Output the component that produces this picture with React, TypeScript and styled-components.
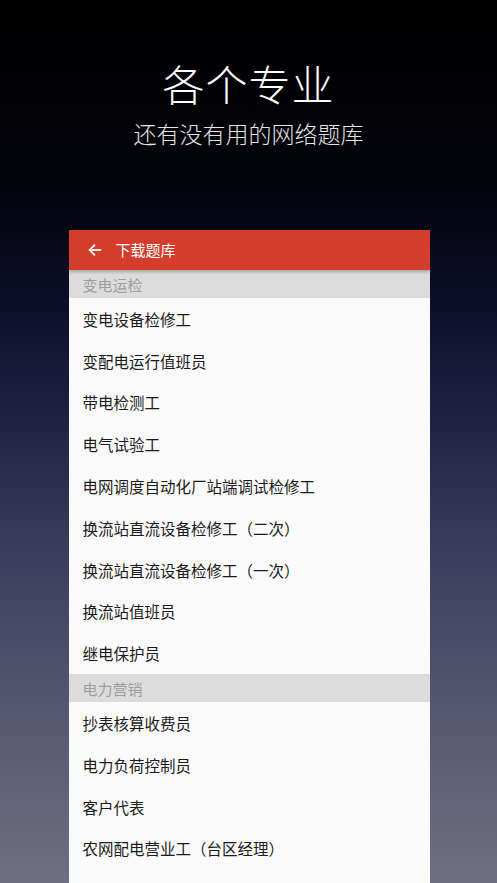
import styled, {createGlobalStyle} from "styled-components";

const GlobalStyle = createGlobalStyle`
    html, body {
        margin: 0;
        padding: 0;
        background: #000;
    }
    * {
        box-sizing: border-box;
    }
`;

const sections = [
    {
        title: "变电运检",
        items: [
            "变电设备检修工",
            "变配电运行值班员",
            "带电检测工",
            "电气试验工",
            "电网调度自动化厂站端调试检修工",
            "换流站直流设备检修工（二次）",
            "换流站直流设备检修工（一次）",
            "换流站值班员",
            "继电保护员",
        ],
    },
    {
        title: "电力营销",
        items: [
            "抄表核算收费员",
            "电力负荷控制员",
            "客户代表",
            "农网配电营业工（台区经理）",
        ],
    },
];

const BackArrow = () => (
    <svg width="16" height="16" viewBox="0 0 24 24" fill="none" stroke="#fff" strokeWidth="2.6"
         strokeLinecap="square" strokeLinejoin="miter">
        <path d="M20 12H5"/>
        <path d="M11 5l-7 7 7 7"/>
    </svg>
);

const App = () => {
    return (
        <Page>
            <GlobalStyle/>
            <Hero>
                <Title>各个专业</Title>
                <Subtitle>还有没有用的网络题库</Subtitle>
            </Hero>

            <Phone>
                <AppBar>
                    <BackArrow/>
                    <AppBarTitle>下载题库</AppBarTitle>
                </AppBar>
                <List>
                    {sections.map(section => (
                        <div key={section.title}>
                            <SectionHeader>{section.title}</SectionHeader>
                            {section.items.map(item => (
                                <Item key={item}>{item}</Item>
                            ))}
                        </div>
                    ))}
                </List>
            </Phone>
        </Page>
    );
}

export default App;


const Page = styled.div`
    width: 497px;
    height: 883px;
    overflow: hidden;
    display: flex;
    flex-direction: column;
    align-items: center;
    font-family: "Noto Sans CJK SC", "Noto Sans", sans-serif;
    background: linear-gradient(to bottom,
        #000000 0%,
        #03030c 22%,
        #0d0f2a 35%,
        #1e2142 47%,
        #3a3c5c 62%,
        #55566f 80%,
        #6f6f82 100%);
`;

const Hero = styled.div`
    flex-shrink: 0;
    display: flex;
    flex-direction: column;
    align-items: center;
    padding-top: 58px;
    height: 230px;
`;

const Title = styled.div`
    color: #fff;
    font-size: 42px;
    font-weight: 300;
    line-height: 50px;
    letter-spacing: 1px;
`;

const Subtitle = styled.div`
    margin-top: 9px;
    color: #e4e4e4;
    font-size: 23px;
    font-weight: 300;
    line-height: 32px;
`;

const Phone = styled.div`
    width: 361px;
    margin-left: 1px;
    flex: 1;
    min-height: 0;
    overflow: hidden;
    background: #fafafa;
    display: flex;
    flex-direction: column;
`;

const AppBar = styled.div`
    flex-shrink: 0;
    position: relative;
    z-index: 1;
    height: 40px;
    display: flex;
    align-items: center;
    padding-left: 18px;
    gap: 13px;
    background: #d43c2b;
    box-shadow: 0 2px 3px rgba(0, 0, 0, .25);
`;

const AppBarTitle = styled.div`
    color: #fff;
    font-size: 15px;
    line-height: 20px;
`;

const List = styled.div`
    display: flex;
    flex-direction: column;
`;

const SectionHeader = styled.div`
    height: 28px;
    display: flex;
    align-items: center;
    padding-left: 14px;
    background: #dcdcdc;
    color: #9e9e9e;
    font-size: 15px;
`;

const Item = styled.div`
    height: 41.8px;
    display: flex;
    align-items: center;
    padding-left: 14px;
    color: #1a1a1a;
    font-size: 15.5px;
`;
